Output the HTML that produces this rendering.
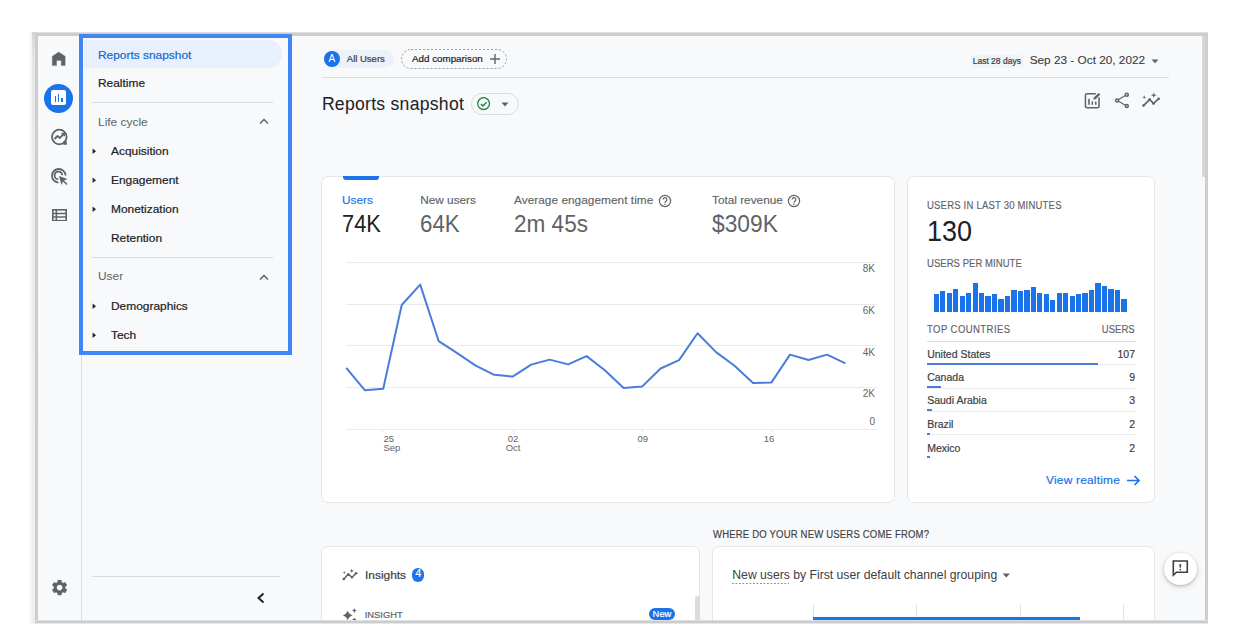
<!DOCTYPE html>
<html><head><meta charset="utf-8"><style>
html,body{margin:0;padding:0;}
body{width:1246px;height:624px;overflow:hidden;position:relative;background:#fff;font-family:"Liberation Sans",sans-serif;}
.t{position:absolute;line-height:1;white-space:nowrap;}
.r{position:absolute;}
</style></head><body>
<div class="r" style="left:28.00px;top:32.00px;width:4.00px;height:592.00px;background:linear-gradient(to right,rgba(236,236,236,0),#f0f0f0);"></div>
<div class="r" style="left:32.00px;top:32.00px;width:3.00px;height:592.00px;background:linear-gradient(to bottom,#d9d9d9,#e6e6e6 30px,#ececec 120px,#efefef);"></div>
<div class="r" style="left:32.00px;top:32.00px;width:3.00px;height:4.00px;background:#d4d4d4;"></div>
<div class="r" style="left:35.00px;top:32.00px;width:1173.00px;height:592.00px;background:#cdcdcd;"></div>
<div class="r" style="left:35.00px;top:32.00px;width:1173.00px;height:1.00px;background:#dedede;"></div>
<div class="r" style="left:38.00px;top:36.00px;width:1167.00px;height:585.00px;background:#f8f9fa;"></div>
<div class="r" style="left:1201.50px;top:36.00px;width:3.50px;height:140.50px;background:#d6d7d8;"></div>
<div class="r" style="left:81.00px;top:36.00px;width:1.00px;height:585.00px;background:#dadce0;"></div>
<svg class="r" style="left:46.00px;top:46.00px;" width="26" height="26" viewBox="0 0 26 26"><path d="M12.7 6 L19.2 10.3 V19.6 H15.2 V14.4 H10.6 V19.6 H6.25 V10.3 Z" fill="#5f6368" stroke="#5f6368" stroke-width="0.3" stroke-linejoin="round"/></svg>
<div class="r" style="left:44.20px;top:83.60px;width:29.10px;height:29.00px;background:#1a73e8;border-radius:50%;"></div>
<div class="r" style="left:51.30px;top:90.30px;width:14.90px;height:15.00px;background:#fff;border-radius:2px;"></div>
<div class="r" style="left:54.80px;top:96.00px;width:1.60px;height:6.20px;background:#1a73e8;"></div>
<div class="r" style="left:57.90px;top:93.60px;width:1.60px;height:8.60px;background:#1a73e8;"></div>
<div class="r" style="left:61.00px;top:98.30px;width:1.60px;height:3.90px;background:#1a73e8;"></div>
<svg class="r" style="left:50.00px;top:128.00px;" width="19" height="19" viewBox="0 0 19 19"><circle cx="9.3" cy="9" r="7.3" fill="none" stroke="#5f6368" stroke-width="1.8"/><path d="M4.5 11 L7.5 8 L9.8 10 L13.5 6.2" fill="none" stroke="#5f6368" stroke-width="1.8"/><path d="M11.5 5.5 H14.2 V8.2" fill="none" stroke="#5f6368" stroke-width="1.6"/><rect x="13.3" y="13.3" width="3.5" height="3.5" fill="#5f6368"/></svg>
<svg class="r" style="left:50.00px;top:167.00px;" width="19" height="19" viewBox="0 0 19 19"><path d="M15.6 8.5 A6.8 6.8 0 1 0 8.5 15.6" fill="none" stroke="#5f6368" stroke-width="1.8"/><path d="M12.2 8.3 A3.8 3.8 0 1 0 8.3 12.2" fill="none" stroke="#5f6368" stroke-width="1.8"/><path d="M9 9 L17.5 12 L14 13.5 L17.5 17 L16.5 18 L13 14.5 L11.5 18 Z" fill="#5f6368"/></svg>
<svg class="r" style="left:51.60px;top:208.60px;" width="15" height="12.5" viewBox="0 0 15 12.5"><rect x="0.8" y="0.8" width="13.4" height="10.9" fill="none" stroke="#5f6368" stroke-width="1.6"/><path d="M1 4.5 H14 M1 8.1 H14 M4.3 1 V12" stroke="#5f6368" stroke-width="1.5"/></svg>
<svg class="r" style="left:49.50px;top:578.40px;" width="19.2" height="19.2" viewBox="0 0 24 24"><path fill="#5f6368" d="M19.14 12.94c.04-.3.06-.61.06-.94 0-.32-.02-.64-.07-.94l2.03-1.58c.18-.14.23-.41.12-.61l-1.92-3.32c-.12-.22-.37-.29-.59-.22l-2.39.96c-.5-.38-1.03-.7-1.62-.94l-.36-2.54c-.04-.24-.24-.41-.48-.41h-3.84c-.24 0-.43.17-.47.41l-.36 2.54c-.59.24-1.13.57-1.62.94l-2.39-.96c-.22-.08-.47 0-.59.22L2.74 8.87c-.12.21-.08.47.12.61l2.03 1.58c-.05.3-.09.63-.09.94s.02.64.07.94l-2.03 1.58c-.18.14-.23.41-.12.61l1.92 3.32c.12.22.37.29.59.22l2.39-.96c.5.38 1.03.7 1.62.94l.36 2.54c.05.24.24.41.48.41h3.84c.24 0 .44-.17.47-.41l.36-2.54c.59-.24 1.13-.56 1.62-.94l2.39.96c.22.08.47 0 .59-.22l1.92-3.32c.12-.22.07-.47-.12-.61l-2.01-1.58zM12 15.6c-1.98 0-3.6-1.62-3.6-3.6s1.62-3.6 3.6-3.6 3.6 1.62 3.6 3.6-1.62 3.6-3.6 3.6z"/></svg>
<div class="r" style="left:84.00px;top:40.00px;width:197.70px;height:28.00px;background:#e8f0fe;border-radius:0 14px 14px 0;"></div>
<div class="t" style="top:49.52px;font-size:11.2px;color:#1967d2;-webkit-text-stroke:0.2px currentColor;left:98.00px;transform:scaleX(1.065);transform-origin:left center;">Reports snapshot</div>
<div class="t" style="top:78.12px;font-size:11.2px;color:#202124;-webkit-text-stroke:0.2px currentColor;left:98.00px;transform:scaleX(1.065);transform-origin:left center;">Realtime</div>
<div class="r" style="left:92.00px;top:102.00px;width:181.00px;height:1.00px;background:#dadce0;"></div>
<div class="t" style="top:116.62px;font-size:11.2px;color:#5f6368;left:98.00px;transform:scaleX(1.065);transform-origin:left center;">Life cycle</div>
<svg class="r" style="left:259.00px;top:117.80px;" width="10" height="7" viewBox="0 0 10 7"><path d="M1 5.5 L5 1.5 L9 5.5" fill="none" stroke="#5f6368" stroke-width="1.5"/></svg>
<div class="t" style="top:145.62px;font-size:11.2px;color:#202124;-webkit-text-stroke:0.2px currentColor;left:111.40px;transform:scaleX(1.065);transform-origin:left center;">Acquisition</div>
<svg class="r" style="left:91.60px;top:147.60px;" width="5" height="7" viewBox="0 0 5 7"><path d="M0.6 0.4 L4 3.2 L0.6 6 Z" fill="#202124"/></svg>
<div class="t" style="top:175.12px;font-size:11.2px;color:#202124;-webkit-text-stroke:0.2px currentColor;left:111.40px;transform:scaleX(1.065);transform-origin:left center;">Engagement</div>
<svg class="r" style="left:91.60px;top:177.10px;" width="5" height="7" viewBox="0 0 5 7"><path d="M0.6 0.4 L4 3.2 L0.6 6 Z" fill="#202124"/></svg>
<div class="t" style="top:204.12px;font-size:11.2px;color:#202124;-webkit-text-stroke:0.2px currentColor;left:111.40px;transform:scaleX(1.065);transform-origin:left center;">Monetization</div>
<svg class="r" style="left:91.60px;top:206.10px;" width="5" height="7" viewBox="0 0 5 7"><path d="M0.6 0.4 L4 3.2 L0.6 6 Z" fill="#202124"/></svg>
<div class="t" style="top:233.22px;font-size:11.2px;color:#202124;-webkit-text-stroke:0.2px currentColor;left:111.40px;transform:scaleX(1.065);transform-origin:left center;">Retention</div>
<div class="r" style="left:92.00px;top:257.00px;width:181.00px;height:1.00px;background:#dadce0;"></div>
<div class="t" style="top:271.32px;font-size:11.2px;color:#5f6368;left:98.00px;transform:scaleX(1.065);transform-origin:left center;">User</div>
<svg class="r" style="left:259.00px;top:273.80px;" width="10" height="7" viewBox="0 0 10 7"><path d="M1 5.5 L5 1.5 L9 5.5" fill="none" stroke="#5f6368" stroke-width="1.5"/></svg>
<div class="t" style="top:301.22px;font-size:11.2px;color:#202124;-webkit-text-stroke:0.2px currentColor;left:111.40px;transform:scaleX(1.065);transform-origin:left center;">Demographics</div>
<svg class="r" style="left:91.60px;top:303.20px;" width="5" height="7" viewBox="0 0 5 7"><path d="M0.6 0.4 L4 3.2 L0.6 6 Z" fill="#202124"/></svg>
<div class="t" style="top:329.92px;font-size:11.2px;color:#202124;-webkit-text-stroke:0.2px currentColor;left:111.40px;transform:scaleX(1.065);transform-origin:left center;">Tech</div>
<svg class="r" style="left:91.60px;top:331.90px;" width="5" height="7" viewBox="0 0 5 7"><path d="M0.6 0.4 L4 3.2 L0.6 6 Z" fill="#202124"/></svg>
<div class="r" style="left:79.00px;top:34.00px;width:212.60px;height:320.60px;border:4px solid #4285f4;box-sizing:border-box;"></div>
<div class="r" style="left:92.00px;top:576.00px;width:188.00px;height:1.00px;background:#dadce0;"></div>
<svg class="r" style="left:255.00px;top:592.00px;" width="11" height="12" viewBox="0 0 11 12"><path d="M8.5 1.5 L3.5 6 L8.5 10.5" fill="none" stroke="#202124" stroke-width="2"/></svg>
<div class="r" style="left:324.00px;top:50.40px;width:70.00px;height:17.60px;background:#ecf1fb;border-radius:9px;"></div>
<div class="r" style="left:324.00px;top:50.80px;width:16.00px;height:16.00px;background:#1a73e8;border-radius:50%;"></div>
<div class="t" style="top:53.77px;font-size:10.2px;color:#fff;left:332.00px;transform:translateX(-50%);">A</div>
<div class="t" style="top:54.46px;font-size:9.5px;color:#3c4043;-webkit-text-stroke:0.2px currentColor;left:346.80px;">All Users</div>
<svg class="r" style="left:401.00px;top:49.00px;" width="106" height="20" viewBox="0 0 106 20"><rect x="0.5" y="0.5" width="105" height="19" rx="9.5" fill="none" stroke="#9aa0a6" stroke-width="1" stroke-dasharray="2.2 1.8"/></svg>
<div class="t" style="top:54.20px;font-size:9.8px;color:#202124;-webkit-text-stroke:0.2px currentColor;left:412.00px;">Add comparison</div>
<svg class="r" style="left:489.00px;top:53.00px;" width="12" height="12" viewBox="0 0 12 12"><path d="M6 1 V11 M1 6 H11" stroke="#5f6368" stroke-width="1.4"/></svg>
<div class="r" style="left:321.60px;top:77.00px;width:847.60px;height:1.00px;background:#dadce0;"></div>
<div class="r" style="left:970.60px;top:54.70px;width:52.10px;height:13.30px;background:#f1f3f4;border-radius:2px;"></div>
<div class="t" style="top:56.80px;font-size:8.5px;color:#3c4043;-webkit-text-stroke:0.2px currentColor;left:972.70px;">Last 28 days</div>
<div class="t" style="top:54.81px;font-size:11.8px;color:#3c4043;-webkit-text-stroke:0.12px currentColor;left:1029.70px;">Sep 23 - Oct 20, 2022</div>
<svg class="r" style="left:1151.00px;top:58.50px;" width="8" height="5" viewBox="0 0 8 5"><path d="M0.5 0.5 H7.5 L4 4.2 Z" fill="#5f6368"/></svg>
<div class="t" style="top:95.70px;font-size:17.6px;color:#202124;letter-spacing:0.27px;left:321.90px;">Reports snapshot</div>
<div class="r" style="left:471.20px;top:92.60px;width:47.90px;height:22.40px;border:1px solid #dadce0;border-radius:11px;box-sizing:border-box;"></div>
<svg class="r" style="left:476.00px;top:96.00px;" width="15" height="15" viewBox="0 0 15 15"><circle cx="7.6" cy="7.6" r="5.9" fill="none" stroke="#1e7e3e" stroke-width="1.3"/><path d="M4.9 8 L6.9 9.9 L10.5 6.3" fill="none" stroke="#1e7e3e" stroke-width="1.4"/></svg>
<svg class="r" style="left:500.50px;top:101.50px;" width="8" height="5" viewBox="0 0 8 5"><path d="M0.5 0.5 H7.5 L4 4.5 Z" fill="#5f6368"/></svg>
<svg class="r" style="left:1082.00px;top:90.00px;" width="22" height="21" viewBox="0 0 22 21"><path d="M13.8 3.65 H5 A1.55 1.55 0 0 0 3.45 5.2 V16.2 A1.55 1.55 0 0 0 5 17.75 H15.5 A1.55 1.55 0 0 0 17.05 16.2 V7.2" fill="none" stroke="#5f6368" stroke-width="1.5"/><rect x="6.2" y="8.9" width="1.6" height="5.9" fill="#5f6368"/><rect x="9.6" y="11.3" width="1.5" height="3.5" fill="#5f6368"/><rect x="13" y="11.6" width="1.5" height="3.2" fill="#5f6368"/><path d="M11.2 9.8 L11.9 7.6 L16.6 2.9 L18.3 4.6 L13.6 9.3 Z" fill="#5f6368"/></svg>
<svg class="r" style="left:1110.00px;top:90.00px;" width="22" height="21" viewBox="0 0 22 21"><circle cx="16.8" cy="4.7" r="1.5" fill="none" stroke="#5f6368" stroke-width="1.5"/><circle cx="7.1" cy="10.4" r="1.5" fill="none" stroke="#5f6368" stroke-width="1.5"/><circle cx="16.8" cy="16.1" r="1.5" fill="none" stroke="#5f6368" stroke-width="1.5"/><path d="M8.5 9.6 L15.4 5.5 M8.5 11.2 L15.4 15.3" stroke="#5f6368" stroke-width="1.2"/></svg>
<svg class="r" style="left:1141.00px;top:92.00px;" width="20" height="16" viewBox="0 0 20 16"><path d="M2.5 13.6 L8.7 7.4 L12.5 11.5 L17.7 6.7" fill="none" stroke="#5f6368" stroke-width="1.7"/><circle cx="2.5" cy="13.6" r="1.3" fill="#5f6368"/><circle cx="8.7" cy="7.4" r="1.3" fill="#5f6368"/><circle cx="12.5" cy="11.5" r="1.3" fill="#5f6368"/><circle cx="17.7" cy="6.7" r="1.3" fill="#5f6368"/><path d="M3.2 3.3 L3.7 4.8 L5.2 5.3 L3.7 5.8 L3.2 7.3 L2.7 5.8 L1.2 5.3 L2.7 4.8 Z" fill="#5f6368"/><path d="M12.8 0.3 L13.5 2.5 L15.7 3.2 L13.5 3.9 L12.8 6.1 L12.1 3.9 L9.9 3.2 L12.1 2.5 Z" fill="#5f6368"/></svg>
<div class="r" style="left:321.00px;top:176.00px;width:574.00px;height:327.00px;background:#fff;border:1px solid #e5e6e8;border-radius:7px;box-sizing:border-box;"></div>
<div class="r" style="left:343.30px;top:176.00px;width:35.70px;height:4.00px;background:#1a73e8;border-radius:0 0 3px 3px;"></div>
<div class="t" style="top:194.81px;font-size:11.8px;color:#1a73e8;-webkit-text-stroke:0.15px currentColor;left:342.00px;">Users</div>
<div class="t" style="top:212.51px;font-size:23.5px;color:#202124;left:341.80px;transform:scaleX(0.93);transform-origin:left center;">74K</div>
<div class="t" style="top:194.81px;font-size:11.8px;color:#5f6368;-webkit-text-stroke:0.15px currentColor;left:420.20px;">New users</div>
<div class="t" style="top:212.51px;font-size:23.5px;color:#5f6368;left:420.00px;transform:scaleX(0.95);transform-origin:left center;">64K</div>
<div class="t" style="top:194.81px;font-size:11.8px;color:#5f6368;-webkit-text-stroke:0.15px currentColor;letter-spacing:0.05px;left:514.00px;">Average engagement time</div>
<div class="t" style="top:212.51px;font-size:23.5px;color:#5f6368;left:513.80px;transform:scaleX(0.96);transform-origin:left center;">2m 45s</div>
<div class="t" style="top:194.81px;font-size:11.8px;color:#5f6368;-webkit-text-stroke:0.15px currentColor;left:712.00px;">Total revenue</div>
<div class="t" style="top:212.51px;font-size:23.5px;color:#5f6368;left:711.80px;transform:scaleX(0.97);transform-origin:left center;">$309K</div>
<svg class="r" style="left:658.00px;top:193.50px;" width="14" height="14" viewBox="0 0 14 14"><circle cx="7" cy="7" r="5.6" fill="none" stroke="#5f6368" stroke-width="1.2"/><path d="M5.1 5.6 A1.9 1.9 0 1 1 7.6 7.4 C7.1 7.7 7 8 7 8.7" fill="none" stroke="#5f6368" stroke-width="1.2"/><circle cx="7" cy="10.2" r="0.75" fill="#5f6368"/></svg>
<svg class="r" style="left:786.80px;top:193.50px;" width="14" height="14" viewBox="0 0 14 14"><circle cx="7" cy="7" r="5.6" fill="none" stroke="#5f6368" stroke-width="1.2"/><path d="M5.1 5.6 A1.9 1.9 0 1 1 7.6 7.4 C7.1 7.7 7 8 7 8.7" fill="none" stroke="#5f6368" stroke-width="1.2"/><circle cx="7" cy="10.2" r="0.75" fill="#5f6368"/></svg>
<div class="r" style="left:346.00px;top:261.90px;width:531.00px;height:1.00px;background:#ebebeb;"></div>
<div class="r" style="left:346.00px;top:303.60px;width:531.00px;height:1.00px;background:#ebebeb;"></div>
<div class="r" style="left:346.00px;top:345.30px;width:531.00px;height:1.00px;background:#ebebeb;"></div>
<div class="r" style="left:346.00px;top:387.00px;width:531.00px;height:1.00px;background:#ebebeb;"></div>
<div class="r" style="left:346.00px;top:428.70px;width:531.00px;height:1.00px;background:#ebebeb;"></div>
<div class="t" style="top:264.34px;font-size:10px;color:#5f6368;right:371.00px;">8K</div>
<div class="t" style="top:306.44px;font-size:10px;color:#5f6368;right:371.00px;">6K</div>
<div class="t" style="top:347.84px;font-size:10px;color:#5f6368;right:371.00px;">4K</div>
<div class="t" style="top:389.14px;font-size:10px;color:#5f6368;right:371.00px;">2K</div>
<div class="t" style="top:417.44px;font-size:10px;color:#5f6368;right:371.00px;">0</div>
<div class="r" style="left:382.30px;top:429.00px;width:1.00px;height:3.00px;background:#e6e6e6;"></div>
<div class="r" style="left:512.60px;top:429.00px;width:1.00px;height:3.00px;background:#e6e6e6;"></div>
<div class="r" style="left:641.70px;top:429.00px;width:1.00px;height:3.00px;background:#e6e6e6;"></div>
<div class="r" style="left:771.20px;top:429.00px;width:1.00px;height:3.00px;background:#e6e6e6;"></div>
<div class="t" style="top:433.56px;font-size:9.5px;color:#5f6368;left:383.50px;">25</div>
<div class="t" style="top:443.36px;font-size:9.5px;color:#5f6368;left:383.50px;">Sep</div>
<div class="t" style="top:433.56px;font-size:9.5px;color:#5f6368;left:513.10px;transform:translateX(-50%);">02</div>
<div class="t" style="top:443.36px;font-size:9.5px;color:#5f6368;left:513.10px;transform:translateX(-50%);">Oct</div>
<div class="t" style="top:433.56px;font-size:9.5px;color:#5f6368;left:642.80px;transform:translateX(-50%);">09</div>
<div class="t" style="top:433.56px;font-size:9.5px;color:#5f6368;left:769.00px;transform:translateX(-50%);">16</div>
<svg class="r" style="left:0;top:0" width="1246" height="624"><polyline points="346.25,367.9 364.74,390.2 383.23,388.7 401.72,305 420.21,284.6 438.70,341.2 457.19,353.2 475.68,365.6 494.17,374.8 512.66,376.6 531.15,364.6 549.64,359.6 568.13,364.4 586.62,356.1 605.11,370.5 623.60,387.9 642.09,386.6 660.58,368.5 679.07,360.1 697.56,333.3 716.05,352.1 734.54,365.7 753.03,383 771.52,382.4 790.01,354.6 808.50,360 826.99,354.6 845.48,363.4" fill="none" stroke="#4a7ddb" stroke-width="2" stroke-linejoin="round"/></svg>
<div class="r" style="left:907.00px;top:176.00px;width:248.00px;height:327.00px;background:#fff;border:1px solid #e5e6e8;border-radius:7px;box-sizing:border-box;"></div>
<div class="t" style="top:200.84px;font-size:10px;color:#5f6368;-webkit-text-stroke:0.15px currentColor;letter-spacing:0.22px;left:927.30px;transform:scaleX(0.95);transform-origin:left center;">USERS IN LAST 30 MINUTES</div>
<div class="t" style="top:216.65px;font-size:29px;color:#202124;left:926.80px;transform:scaleX(0.93);transform-origin:left center;">130</div>
<div class="t" style="top:259.04px;font-size:10px;color:#5f6368;-webkit-text-stroke:0.15px currentColor;letter-spacing:0.06px;left:927.30px;transform:scaleX(0.95);transform-origin:left center;">USERS PER MINUTE</div>
<div class="r" style="left:933.70px;top:294.30px;width:5.30px;height:17.50px;background:#1a73e8;"></div>
<div class="r" style="left:940.17px;top:291.40px;width:5.30px;height:20.40px;background:#1a73e8;"></div>
<div class="r" style="left:946.63px;top:293.00px;width:5.30px;height:18.80px;background:#1a73e8;"></div>
<div class="r" style="left:953.10px;top:288.90px;width:5.30px;height:22.90px;background:#1a73e8;"></div>
<div class="r" style="left:959.57px;top:296.00px;width:5.30px;height:15.80px;background:#1a73e8;"></div>
<div class="r" style="left:966.04px;top:293.00px;width:5.30px;height:18.80px;background:#1a73e8;"></div>
<div class="r" style="left:972.50px;top:283.20px;width:5.30px;height:28.60px;background:#1a73e8;"></div>
<div class="r" style="left:978.97px;top:293.00px;width:5.30px;height:18.80px;background:#1a73e8;"></div>
<div class="r" style="left:985.44px;top:296.00px;width:5.30px;height:15.80px;background:#1a73e8;"></div>
<div class="r" style="left:991.90px;top:294.10px;width:5.30px;height:17.70px;background:#1a73e8;"></div>
<div class="r" style="left:998.37px;top:299.00px;width:5.30px;height:12.80px;background:#1a73e8;"></div>
<div class="r" style="left:1004.84px;top:296.00px;width:5.30px;height:15.80px;background:#1a73e8;"></div>
<div class="r" style="left:1011.30px;top:290.10px;width:5.30px;height:21.70px;background:#1a73e8;"></div>
<div class="r" style="left:1017.77px;top:291.40px;width:5.30px;height:20.40px;background:#1a73e8;"></div>
<div class="r" style="left:1024.24px;top:290.10px;width:5.30px;height:21.70px;background:#1a73e8;"></div>
<div class="r" style="left:1030.70px;top:287.20px;width:5.30px;height:24.60px;background:#1a73e8;"></div>
<div class="r" style="left:1037.17px;top:293.00px;width:5.30px;height:18.80px;background:#1a73e8;"></div>
<div class="r" style="left:1043.64px;top:294.30px;width:5.30px;height:17.50px;background:#1a73e8;"></div>
<div class="r" style="left:1050.11px;top:300.10px;width:5.30px;height:11.70px;background:#1a73e8;"></div>
<div class="r" style="left:1056.57px;top:293.00px;width:5.30px;height:18.80px;background:#1a73e8;"></div>
<div class="r" style="left:1063.04px;top:293.00px;width:5.30px;height:18.80px;background:#1a73e8;"></div>
<div class="r" style="left:1069.51px;top:296.00px;width:5.30px;height:15.80px;background:#1a73e8;"></div>
<div class="r" style="left:1075.97px;top:294.10px;width:5.30px;height:17.70px;background:#1a73e8;"></div>
<div class="r" style="left:1082.44px;top:293.00px;width:5.30px;height:18.80px;background:#1a73e8;"></div>
<div class="r" style="left:1088.91px;top:290.10px;width:5.30px;height:21.70px;background:#1a73e8;"></div>
<div class="r" style="left:1095.38px;top:283.20px;width:5.30px;height:28.60px;background:#1a73e8;"></div>
<div class="r" style="left:1101.84px;top:286.10px;width:5.30px;height:25.70px;background:#1a73e8;"></div>
<div class="r" style="left:1108.31px;top:288.90px;width:5.30px;height:22.90px;background:#1a73e8;"></div>
<div class="r" style="left:1114.78px;top:290.10px;width:5.30px;height:21.70px;background:#1a73e8;"></div>
<div class="r" style="left:1121.24px;top:299.00px;width:5.30px;height:12.80px;background:#1a73e8;"></div>
<div class="t" style="top:324.84px;font-size:10px;color:#5f6368;-webkit-text-stroke:0.15px currentColor;letter-spacing:0.47px;left:927.30px;transform:scaleX(0.95);transform-origin:left center;">TOP COUNTRIES</div>
<div class="t" style="top:324.84px;font-size:10px;color:#5f6368;-webkit-text-stroke:0.15px currentColor;letter-spacing:0.05px;right:111.50px;transform:scaleX(0.95);transform-origin:right center;">USERS</div>
<div class="r" style="left:927.00px;top:341.00px;width:209.00px;height:1.00px;background:#dadce0;"></div>
<div class="t" style="top:348.61px;font-size:10.5px;color:#3c4043;-webkit-text-stroke:0.2px currentColor;left:927.20px;">United States</div>
<div class="t" style="top:348.61px;font-size:10.5px;color:#3c4043;-webkit-text-stroke:0.2px currentColor;right:111.00px;">107</div>
<div class="r" style="left:927.00px;top:364.10px;width:209.00px;height:1.00px;background:#ebebeb;"></div>
<div class="r" style="left:927.00px;top:362.60px;width:170.90px;height:2.00px;background:#4a7ddb;"></div>
<div class="t" style="top:371.71px;font-size:10.5px;color:#3c4043;-webkit-text-stroke:0.2px currentColor;left:927.20px;">Canada</div>
<div class="t" style="top:371.71px;font-size:10.5px;color:#3c4043;-webkit-text-stroke:0.2px currentColor;right:111.00px;">9</div>
<div class="r" style="left:927.00px;top:387.50px;width:209.00px;height:1.00px;background:#ebebeb;"></div>
<div class="r" style="left:927.00px;top:386.00px;width:14.20px;height:2.00px;background:#4a7ddb;"></div>
<div class="t" style="top:395.21px;font-size:10.5px;color:#3c4043;-webkit-text-stroke:0.2px currentColor;left:927.20px;">Saudi Arabia</div>
<div class="t" style="top:395.21px;font-size:10.5px;color:#3c4043;-webkit-text-stroke:0.2px currentColor;right:111.00px;">3</div>
<div class="r" style="left:927.00px;top:410.90px;width:209.00px;height:1.00px;background:#ebebeb;"></div>
<div class="r" style="left:927.00px;top:409.40px;width:5.00px;height:2.00px;background:#4a7ddb;"></div>
<div class="t" style="top:419.21px;font-size:10.5px;color:#3c4043;-webkit-text-stroke:0.2px currentColor;left:927.20px;">Brazil</div>
<div class="t" style="top:419.21px;font-size:10.5px;color:#3c4043;-webkit-text-stroke:0.2px currentColor;right:111.00px;">2</div>
<div class="r" style="left:927.00px;top:434.20px;width:209.00px;height:1.00px;background:#ebebeb;"></div>
<div class="r" style="left:927.00px;top:432.70px;width:3.00px;height:2.00px;background:#4a7ddb;"></div>
<div class="t" style="top:442.51px;font-size:10.5px;color:#3c4043;-webkit-text-stroke:0.2px currentColor;left:927.20px;">Mexico</div>
<div class="t" style="top:442.51px;font-size:10.5px;color:#3c4043;-webkit-text-stroke:0.2px currentColor;right:111.00px;">2</div>
<div class="r" style="left:927.00px;top:456.30px;width:3.00px;height:2.00px;background:#4a7ddb;"></div>
<div class="t" style="top:475.42px;font-size:11.2px;color:#1a73e8;letter-spacing:0.2px;-webkit-text-stroke:0.2px currentColor;left:1045.50px;transform:scaleX(1.065);transform-origin:left center;">View realtime</div>
<svg class="r" style="left:1126.00px;top:474.00px;" width="15" height="14" viewBox="0 0 15 14"><path d="M1 6.5 H13 M8.5 2 L13 6.5 L8.5 11" fill="none" stroke="#1a73e8" stroke-width="1.7"/></svg>
<div class="t" style="top:530.13px;font-size:10px;color:#3c4043;-webkit-text-stroke:0.15px currentColor;letter-spacing:0.21px;left:712.90px;transform:scaleX(0.95);transform-origin:left center;">WHERE DO YOUR NEW USERS COME FROM?</div>
<div class="r" style="left:321.00px;top:546.00px;width:379.00px;height:94.00px;background:#fff;border:1px solid #e5e6e8;border-radius:7px;box-sizing:border-box;"></div>
<svg class="r" style="left:341.00px;top:567.00px;" width="18" height="15" viewBox="0 0 18 15"><path d="M2.8 12 L7.4 6.9 L10.9 10.6 L15.1 6.3" fill="none" stroke="#5f6368" stroke-width="1.5" stroke-linejoin="round"/><circle cx="2.8" cy="12" r="1.3" fill="#5f6368"/><circle cx="7.4" cy="6.9" r="1" fill="#5f6368"/><circle cx="10.9" cy="10.6" r="1" fill="#5f6368"/><circle cx="15.1" cy="6.3" r="1.3" fill="#5f6368"/><path d="M3.3 4.3 Q3.65 5.25 4.6 5.6 Q3.65 5.949999999999999 3.3 6.8999999999999995 Q2.9499999999999997 5.949999999999999 1.9999999999999998 5.6 Q2.9499999999999997 5.25 3.3 4.3 Z M10.7 1.9 Q11.2 3.3 12.6 3.8 Q11.2 4.3 10.7 5.699999999999999 Q10.2 4.3 8.799999999999999 3.8 Q10.2 3.3 10.7 1.9 Z" fill="#5f6368"/></svg>
<div class="t" style="top:570.32px;font-size:11.2px;color:#3c4043;-webkit-text-stroke:0.2px currentColor;left:364.70px;transform:scaleX(1.065);transform-origin:left center;">Insights</div>
<div class="r" style="left:412.20px;top:567.60px;width:12.10px;height:14.40px;background:#1a73e8;border-radius:6px;"></div>
<div class="t" style="top:569.48px;font-size:10.3px;color:#fff;-webkit-text-stroke:0.2px currentColor;left:418.25px;transform:translateX(-50%);">4</div>
<svg class="r" style="left:338.00px;top:602.00px;" width="24" height="22" viewBox="0 0 24 22"><path d="M9.7 8.600000000000001 Q10.799999999999999 12.3 14.5 13.4 Q10.799999999999999 14.5 9.7 18.2 Q8.6 14.5 4.8999999999999995 13.4 Q8.6 12.3 9.7 8.600000000000001 Z M16.4 6.3 Q16.9 8.1 18.7 8.6 Q16.9 9.1 16.4 10.899999999999999 Q15.899999999999999 9.1 14.099999999999998 8.6 Q15.899999999999999 8.1 16.4 6.3 Z M16.4 15.5 Q16.9 17.3 18.7 17.8 Q16.9 18.3 16.4 20.1 Q15.899999999999999 18.3 14.099999999999998 17.8 Q15.899999999999999 17.3 16.4 15.5 Z" fill="#5f6368"/></svg>
<div class="t" style="top:610.34px;font-size:9.4px;color:#5f6368;-webkit-text-stroke:0.2px currentColor;left:364.70px;">INSIGHT</div>
<div class="r" style="left:648.90px;top:607.50px;width:26.30px;height:12.80px;background:#1a73e8;border-radius:7px;"></div>
<div class="t" style="top:609.24px;font-size:9.4px;color:#fff;-webkit-text-stroke:0.2px currentColor;left:662.00px;transform:translateX(-50%);">New</div>
<div class="r" style="left:694.60px;top:596.00px;width:5.30px;height:44.00px;background:#dadce0;border-radius:2px 2px 0 0;"></div>
<div class="r" style="left:712.00px;top:546.00px;width:443.00px;height:94.00px;background:#fff;border:1px solid #e5e6e8;border-radius:7px;box-sizing:border-box;"></div>
<div class="t" style="top:569.47px;font-size:12.2px;color:#3c4043;left:732.30px;">New users by First user default channel grouping</div>
<div class="r" style="left:732.00px;top:582.60px;width:57.00px;height:1.20px;background-image:linear-gradient(to right,#8a8f94 50%,transparent 50%);background-size:3.5px 1.2px;"></div>
<svg class="r" style="left:1002.00px;top:573.00px;" width="9" height="5" viewBox="0 0 9 5"><path d="M0.5 0.5 H8 L4.25 4.5 Z" fill="#5f6368"/></svg>
<div class="r" style="left:812.60px;top:603.60px;width:1.00px;height:17.40px;background:#e3e4e6;"></div>
<div class="r" style="left:916.30px;top:603.60px;width:1.00px;height:17.40px;background:#e3e4e6;"></div>
<div class="r" style="left:1020.00px;top:603.60px;width:1.00px;height:17.40px;background:#e3e4e6;"></div>
<div class="r" style="left:1122.80px;top:603.60px;width:1.00px;height:17.40px;background:#e3e4e6;"></div>
<div class="r" style="left:813.00px;top:617.30px;width:266.70px;height:3.70px;background:#1a73e8;"></div>
<div class="r" style="left:1164.00px;top:552.50px;width:32.60px;height:32.70px;background:#fff;border-radius:50%;box-shadow:0 1px 3px rgba(60,64,67,0.3),0 2px 6px rgba(60,64,67,0.12);"></div>
<svg class="r" style="left:1171.00px;top:559.00px;" width="19" height="19" viewBox="0 0 19 19"><path d="M2.3 2 H16.3 V13.2 H5.4 L2.3 16.2 Z" fill="none" stroke="#3c4043" stroke-width="1.6" stroke-linejoin="miter"/><path d="M9.3 5 V8.6" stroke="#3c4043" stroke-width="1.6"/><circle cx="9.3" cy="10.6" r="0.9" fill="#3c4043"/></svg>
<div class="r" style="left:35.00px;top:620.00px;width:1173.00px;height:1.00px;background:#dddedf;"></div>
<div class="r" style="left:35.00px;top:621.00px;width:1173.00px;height:2.00px;background:#cbcccd;"></div>
<div class="r" style="left:35.00px;top:623.00px;width:1173.00px;height:1.00px;background:#e6e7e8;"></div>
</body></html>
